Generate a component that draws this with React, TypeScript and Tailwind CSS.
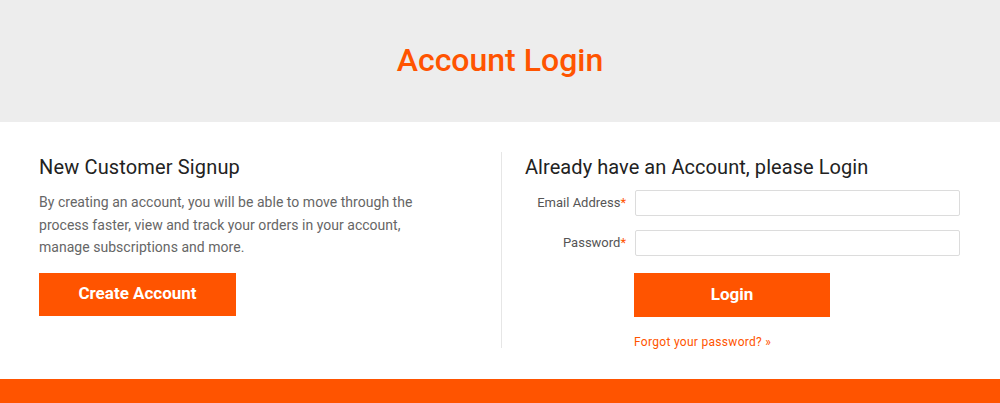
export default function App() {
  return (
    <div className="w-[1000px] h-[403px] bg-white flex flex-col font-['Roboto',sans-serif]">
      {/* Header */}
      <div className="h-[122px] bg-[#ededed] flex items-center justify-center">
        <h1 className="text-[32px] font-medium text-[#ff5400] leading-none pb-[2px]">
          Account Login
        </h1>
      </div>

      {/* Body */}
      <div className="flex-1 flex pt-[30px]">
        {/* Left */}
        <div className="w-[501px] pl-[39px] pt-px">
          <h2 className="text-[20px] text-[#222] leading-[28px] tracking-[0.15px]">New Customer Signup</h2>
          <p className="mt-[10px] text-[14px] leading-[22.5px] text-[#666] w-[385px] tracking-[0.03px]">
            By creating an account, you will be able to move through the process faster, view and track your orders in your account, manage subscriptions and more.
          </p>
          <button className="mt-[14px] w-[197px] h-[43px] bg-[#ff5400] text-white text-[17px] font-bold">
            Create Account
          </button>
        </div>

        {/* Divider */}
        <div className="w-px h-[196px] bg-[#e6e6e6]" />

        {/* Right */}
        <div className="flex-1 pl-[23px] pt-px">
          <h2 className="text-[20px] text-[#222] leading-[28px] tracking-[0.06px]">
            Already have an Account, please Login
          </h2>
          <div className="mt-[9px] flex flex-col gap-[14px]">
            <div className="flex items-center">
              <label className="w-[110px] shrink-0 text-right text-[13px] text-[#555] pr-[9px]">
                Email Address<span className="text-[#ff5400]">*</span>
              </label>
              <input className="w-[325px] h-[26px] border border-[#dcdcdc] rounded-[2px] outline-none" />
            </div>
            <div className="flex items-center">
              <label className="w-[110px] shrink-0 text-right text-[13px] text-[#555] pr-[9px]">
                Password<span className="text-[#ff5400]">*</span>
              </label>
              <input type="password" className="w-[325px] h-[26px] border border-[#dcdcdc] rounded-[2px] outline-none" />
            </div>
          </div>
          <div className="pl-[109px]">
            <button className="mt-[17px] w-[196px] h-[44px] bg-[#ff5400] text-white text-[17px] font-bold">
              Login
            </button>
            <div className="mt-[16px] text-[12px] text-[#ff5400] tracking-[0.3px]">Forgot your password? »</div>
          </div>
        </div>
      </div>

      {/* Footer bar */}
      <div className="h-[24px] bg-[#ff5400]" />
    </div>
  );
}
